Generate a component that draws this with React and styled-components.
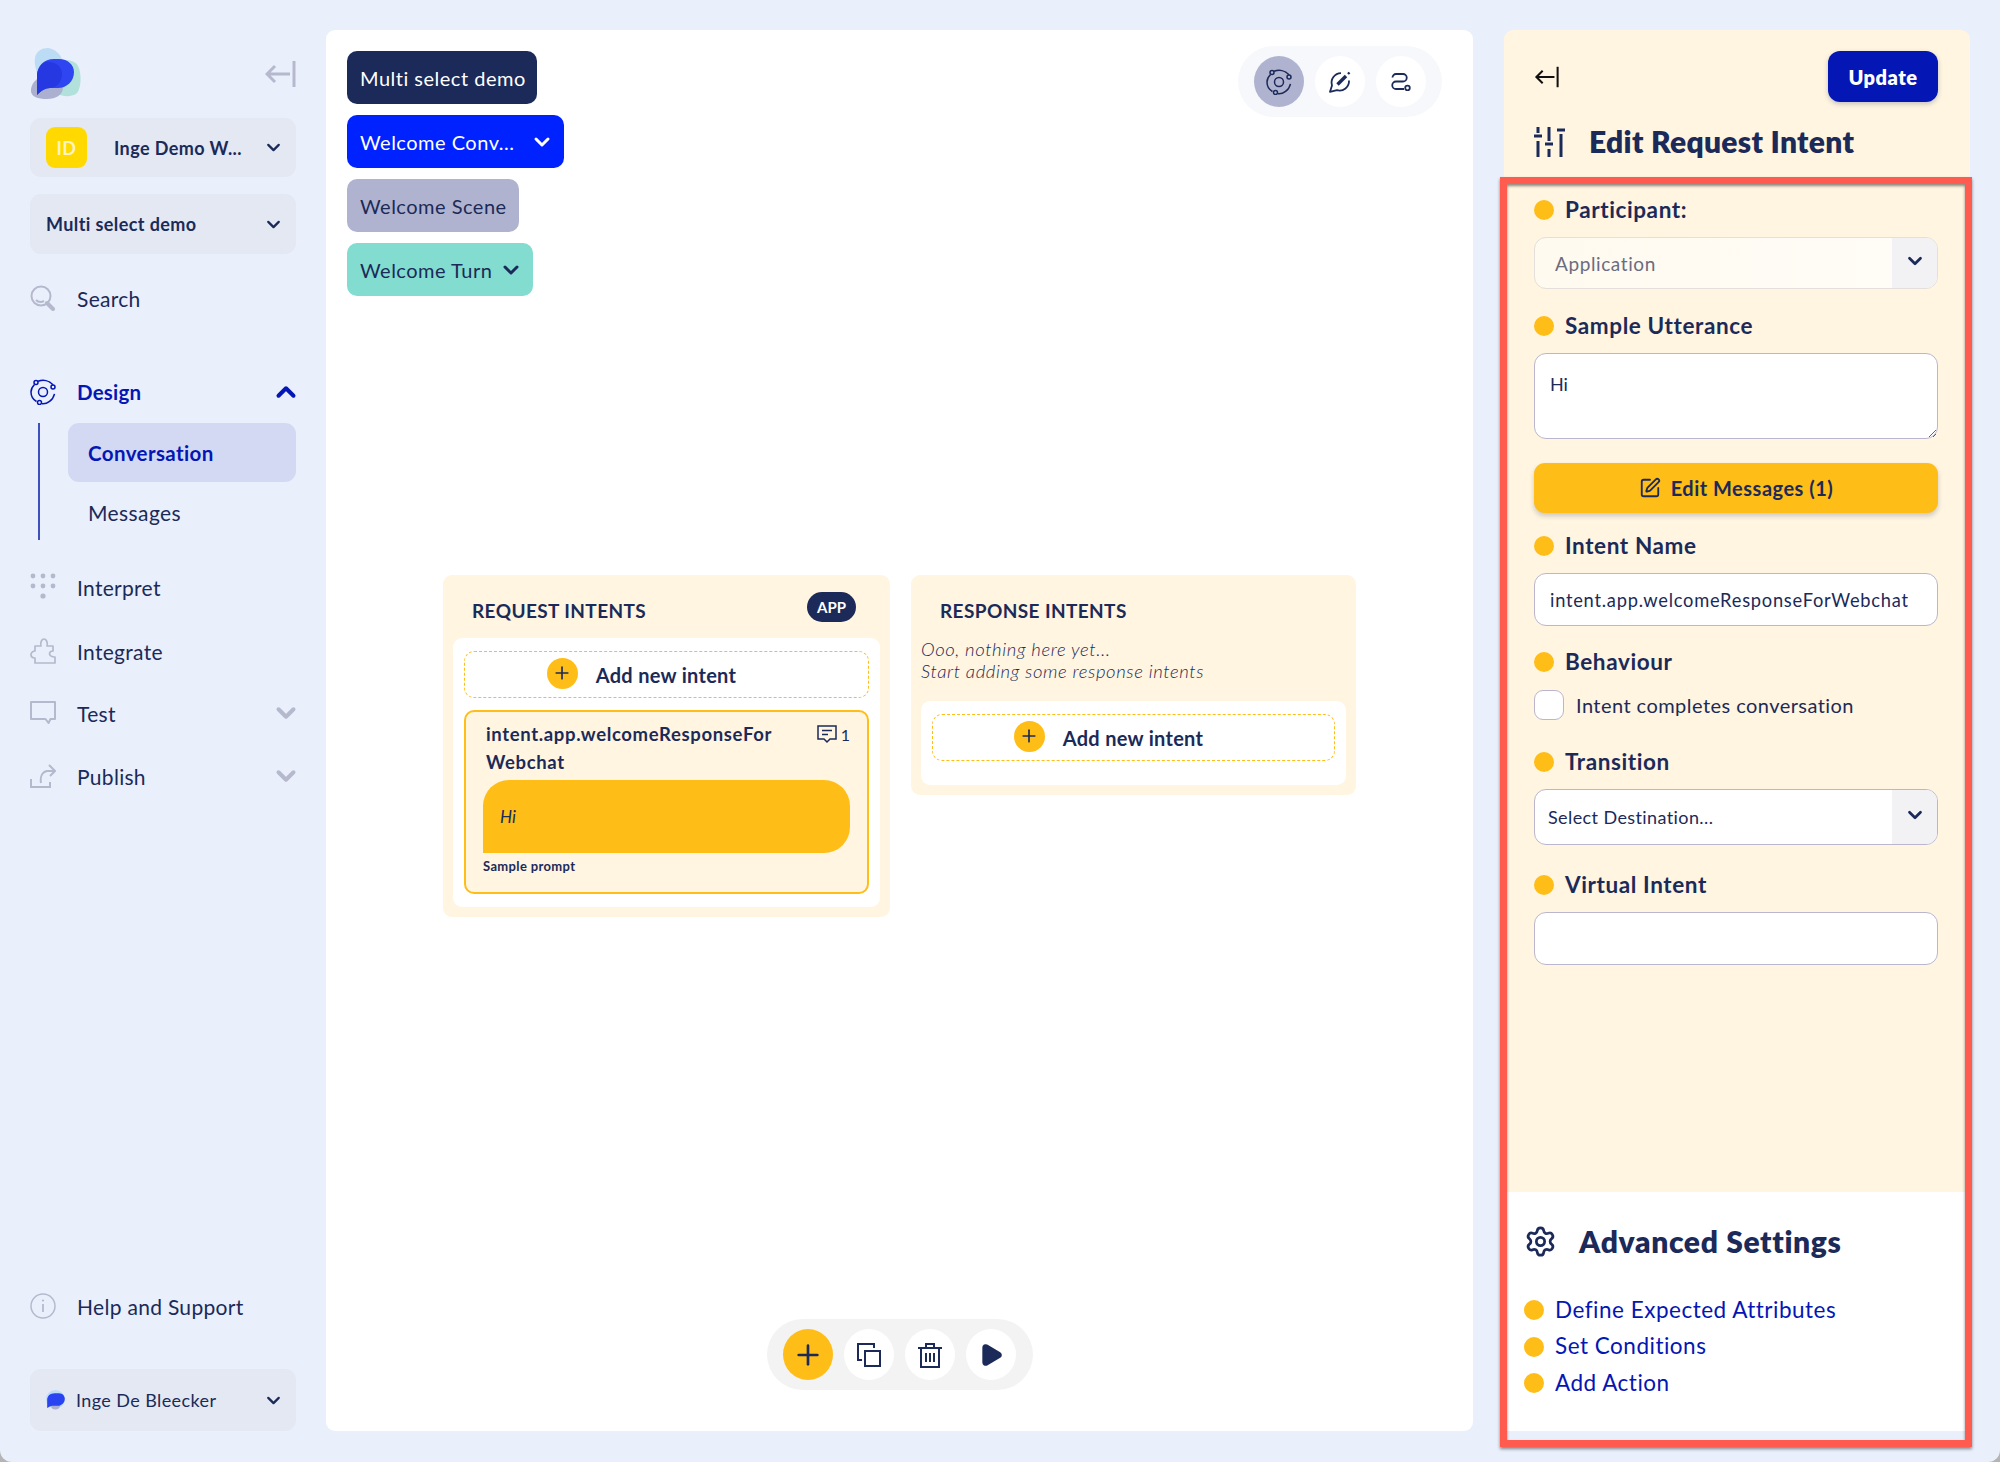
import React from "react";
import styled, { createGlobalStyle } from "styled-components";
import { ChevronDown, ChevronUp, Plus, Settings, SquarePen, Play } from "lucide-react";

const NAVY = "#1b2a58";
const BLUE = "#0416b4";
const YELLOW = "#ffbd17";
const CREAM = "#fff5e0";
const GREY = "#b6b9cd";
const FONT = `Lato, "Noto Sans", sans-serif`;

const Global = createGlobalStyle`
  html, body { margin: 0; padding: 0; background: #b4b4b4; }
  * { box-sizing: border-box; }
  body { font-family: ${FONT}; color: ${NAVY}; }
`;

const Page = styled.div`
  width: 2000px;
  height: 1462px;
  padding: 30px 30px 31px 30px;
  background: #e9effb;
  border-radius: 0 0 12px 12px;
  display: grid;
  grid-template-columns: 266px 1147px 467px;
  column-gap: 30px;
  overflow: hidden;
  & > :last-child { margin-left: 1px; }
`;

/* Sidebar */
const Sidebar = styled.aside`
  display: flex;
  flex-direction: column;
  min-height: 0;
`;
const LogoRow = styled.div`
  margin-top: 18px;
  height: 51px;
  display: flex;
  align-items: center;
  justify-content: space-between;
`;
const SideBox = styled.div`
  margin-top: ${(p) => p.$mt || 0}px;
  height: ${(p) => p.$h}px;
  border-radius: 11px;
  background: #e3e8f3;
  display: flex;
  align-items: center;
  padding: 0 12px 0 16px;
  font-size: ${(p) => p.$size || 18}px;
  font-weight: ${(p) => p.$weight || 700};
  letter-spacing: ${(p) => p.$ls || 0.4}px;
`;
const Badge = styled.span`
  width: 41px;
  height: 41px;
  border-radius: 9px;
  background: #ffd900;
  color: #fff3c0;
  font-size: 18px;
  font-weight: 700;
  display: flex;
  align-items: center;
  justify-content: center;
  margin-right: 27px;
`;
const Grow = styled.span`
  flex: 1;
  white-space: nowrap;
`;
const NavRow = styled.div`
  margin-top: ${(p) => p.$mt || 0}px;
  height: 40px;
  display: flex;
  align-items: center;
  gap: 21px;
  font-size: ${(p) => (p.$active ? 20.5 : 21)}px;
  letter-spacing: ${(p) => (p.$active ? 0.2 : 0.3)}px;
  font-weight: ${(p) => (p.$active ? 700 : 400)};
  color: ${(p) => (p.$active ? BLUE : NAVY)};
  & > svg:first-child { flex: none; }
`;
const SubList = styled.div`
  margin-top: 11px;
  margin-left: 8px;
  height: 117px;
  border-left: 2px solid #3f4fbc;
  padding-left: 28px;
`;
const SubItem = styled.div`
  height: ${(p) => (p.$active ? 59 : 56)}px;
  margin-bottom: 2px;
  padding-left: 20px;
  display: flex;
  align-items: center;
  border-radius: 11px;
  font-size: ${(p) => (p.$active ? 20.5 : 21)}px;
  letter-spacing: 0.4px;
  background: ${(p) => (p.$active ? "#d3d9f2" : "transparent")};
  color: ${(p) => (p.$active ? BLUE : NAVY)};
  font-weight: ${(p) => (p.$active ? 700 : 400)};
`;
const Spacer = styled.div`
  flex: 1;
`;

/* Canvas */
const Canvas = styled.main`
  position: relative;
  background: #fff;
  border-radius: 9px;
  padding: 21px;
`;
const Crumbs = styled.div`
  display: flex;
  flex-direction: column;
  align-items: flex-start;
  gap: 11px;
`;
const Crumb = styled.div`
  height: 53px;
  width: ${(p) => p.$w}px;
  border-radius: 10px;
  padding: 0 10px 0 13px;
  display: flex;
  align-items: center;
  justify-content: space-between;
  white-space: nowrap;
  font-size: 20px;
  letter-spacing: 0.5px;
  background: ${(p) => p.$bg};
  color: ${(p) => p.$fg};
`;
const ToolPill = styled.div`
  position: absolute;
  display: flex;
  gap: 11px;
  border-radius: 40px;
  background: ${(p) => p.$bg};
  padding: 10px 16px 10px 16px;
  ${(p) => p.$pos}
`;
const ToolBtn = styled.div`
  width: 50px;
  height: 51px;
  border-radius: 50%;
  background: ${(p) => p.$bg || "#fff"};
  display: flex;
  align-items: center;
  justify-content: center;
  color: ${NAVY};
`;
const Nodes = styled.div`
  position: absolute;
  left: 117px;
  top: 545px;
  display: flex;
  align-items: flex-start;
  gap: 21px;
`;
const Column = styled.section`
  width: ${(p) => p.$w}px;
  background: ${CREAM};
  border-radius: 9px;
  padding: 0 10px 10px 10px;
`;
const ColHead = styled.div`
  height: 63px;
  padding: 17px 24px 0 19px;
  display: flex;
  justify-content: space-between;
`;
const ColTitle = styled.h3`
  margin: 3px 0 0;
  font-size: 19px;
  line-height: 32px;
  font-weight: 700;
  letter-spacing: 0.4px;
`;
const AppPill = styled.span`
  width: 49px;
  height: 30px;
  border-radius: 15px;
  background: ${NAVY};
  color: #fff;
  font-size: 15px;
  font-weight: 700;
  display: flex;
  align-items: center;
  justify-content: center;
`;
const Empty = styled.p`
  margin: 0 0 19px 0;
  font-size: 18.5px;
  line-height: 22px;
  font-style: italic;
  font-weight: 300;
  letter-spacing: 0.6px;
`;
const White = styled.div`
  background: #fff;
  border-radius: 9px;
  padding: 13px 11px ${(p) => p.$pb || 13}px;
  display: flex;
  flex-direction: column;
  gap: 12px;
`;
const AddNew = styled.div`
  height: 47px;
  padding-right: 50px;
  border: 1.5px dashed ${YELLOW};
  border-radius: 10px;
  display: flex;
  align-items: center;
  justify-content: center;
  gap: 18px;
  font-size: 20px;
  font-weight: 700;
  letter-spacing: 0.3px;
`;
const RoundPlus = styled.span`
  width: 31px;
  height: 31px;
  border-radius: 50%;
  background: ${YELLOW};
  display: flex;
  align-items: center;
  justify-content: center;
  margin-top: -3px;
`;
const IntentCard = styled.div`
  height: 184px;
  border: 2.5px solid ${YELLOW};
  border-radius: 10px;
  background: ${CREAM};
  padding: 8px 17px 0 17px;
`;
const IntentHead = styled.div`
  display: flex;
  justify-content: space-between;
  padding-left: 3px;
`;
const IntentName = styled.div`
  font-size: 18.5px;
  line-height: 28px;
  font-weight: 700;
  letter-spacing: 0.65px;
`;
const Count = styled.div`
  display: flex;
  align-items: center;
  gap: 4px;
  height: 28px;
  font-size: 16px;
`;
const Bubble = styled.div`
  margin-top: 4px;
  height: 73px;
  background: ${YELLOW};
  border-radius: 26px 26px 26px 0;
  padding-left: 17px;
  display: flex;
  align-items: center;
  font-style: italic;
  font-size: 17px;
`;
const Caption = styled.div`
  margin-top: 5px;
  font-size: 13px;
  line-height: 16px;
  font-weight: 700;
  letter-spacing: 0.35px;
`;

/* Right panel */
const Panel = styled.aside`
  position: relative;
  display: flex;
  flex-direction: column;
  border-radius: 9px;
  background: ${CREAM};
`;
const PanelHead = styled.header`
  height: 166px;
  padding: 21px 32px 0 30px;
`;
const HeadTop = styled.div`
  display: flex;
  align-items: center;
  justify-content: space-between;
`;
const UpdateBtn = styled.button`
  width: 110px;
  height: 51px;
  border: 0;
  border-radius: 12px;
  background: ${BLUE};
  color: #fff;
  font-family: ${FONT};
  font-size: 20px;
  font-weight: 800;
  letter-spacing: 0.5px;
  box-shadow: 0 2px 5px rgba(27, 42, 88, 0.25);
`;
const PanelTitle = styled.h2`
  margin: 20px 0 0;
  display: flex;
  align-items: center;
  gap: ${(p) => p.$gap || 24}px;
  font-size: 30px;
  line-height: 38px;
  font-weight: 800;
  letter-spacing: ${(p) => p.$ls}px;
`;
const PanelBody = styled.div`
  flex: 1;
  padding: 0 32px 0 30px;
`;
const Field = styled.div`
  margin-top: ${(p) => p.$mt || 0}px;
  display: flex;
  flex-direction: column;
  gap: 13px;
`;
const Label = styled.label`
  height: 28px;
  display: flex;
  align-items: center;
  gap: 10px;
  font-size: 22.5px;
  font-weight: 700;
  letter-spacing: 0.6px;
`;
const LiftedText = styled.span`
  margin-bottom: 2px;
`;
const Dot = styled.span`
  flex: none;
  width: 20px;
  height: 20px;
  border-radius: 50%;
  background: ${YELLOW};
  margin-right: 1px;
`;
const SelectBox = styled.div`
  height: ${(p) => p.$h}px;
  border: 1.5px solid ${(p) => (p.$disabled ? "#e2dfdc" : "#b9b6ce")};
  border-radius: 12px;
  background: ${(p) => (p.$disabled ? "linear-gradient(90deg,#fffaef,#fffdf8)" : "#fff")};
  display: flex;
  overflow: hidden;
  font-size: ${(p) => (p.$disabled ? 19 : 18)}px;
  letter-spacing: ${(p) => (p.$disabled ? 0.6 : 0.4)}px;
  color: ${(p) => (p.$disabled ? "#6a6c80" : NAVY)};
`;
const SelectValue = styled.div`
  flex: 1;
  display: flex;
  align-items: center;
  padding-left: ${(p) => p.$pl}px;
`;
const SelectArrow = styled.div`
  width: 45px;
  background: #f2f2f4;
  color: ${NAVY};
  display: flex;
  align-items: center;
  justify-content: center;
  padding-bottom: 4px;
`;
const TextArea = styled.textarea`
  display: block;
  width: 100%;
  height: 86px;
  border: 1.5px solid #b9b6ce;
  border-radius: 12px;
  background: #fff;
  padding: 19px 15px;
  font-family: ${FONT};
  font-size: 18px;
  color: ${NAVY};
  outline: none;
`;
const TextInput = styled.input`
  display: block;
  width: 100%;
  height: 53px;
  border: 1.5px solid #b9b6ce;
  border-radius: 12px;
  background: #fff;
  padding: 0 15px;
  font-family: ${FONT};
  font-size: 18.3px;
  letter-spacing: 0.75px;
  color: ${NAVY};
  outline: none;
`;
const EditBtn = styled.button`
  margin-top: 24px;
  width: 100%;
  height: 50px;
  border: 0;
  border-radius: 11px;
  background: ${YELLOW};
  color: ${NAVY};
  font-family: ${FONT};
  font-size: 20px;
  font-weight: 700;
  letter-spacing: 0.5px;
  display: flex;
  align-items: center;
  justify-content: center;
  gap: 10px;
  box-shadow: 0 3px 5px rgba(27, 42, 88, 0.22);
`;
const CheckRow = styled.div`
  display: flex;
  align-items: center;
  gap: 12px;
  font-size: 20px;
  letter-spacing: 0.45px;
  margin-top: 1px;
`;
const Check = styled.span`
  width: 30px;
  height: 30px;
  border: 1.5px solid #b9b6ce;
  border-radius: 9px;
  background: #fff;
`;
const Advanced = styled.section`
  height: 239px;
  background: #fff;
  padding: 30px 20px 0 20px;
`;
const LinkList = styled.div`
  margin-top: 36px;
  display: flex;
  flex-direction: column;
  gap: 8.5px;
`;
const LinkRow = styled.a`
  height: 28px;
  display: flex;
  align-items: center;
  gap: 10px;
  font-size: 22.5px;
  letter-spacing: 0.5px;
  color: ${BLUE};
`;
const Annotation = styled.div`
  position: absolute;
  left: -4px;
  right: -2px;
  top: 147px;
  bottom: -16px;
  border: 7px solid #ff5b4f;
  box-shadow: 0 2px 3px rgba(0, 0, 0, 0.45), inset 0 2px 3px rgba(0, 0, 0, 0.45);
  pointer-events: none;
`;

/* Drawings */
const Logo = ({ s = 51 }) => (
  <svg width={s} height={s} viewBox="0 0 51 51">
    <path d="M5 10C6 3 12 0 18 0c7 1 13 6 15 14l-4 16H9C6 22 4 16 5 10Z" fill="#bcdcf5" />
    <path d="M24 14c8-3 20-3 24 4 4 8 3 22-1 27-4 4-14 4-19 1Z" fill="#b2e0db" />
    <path d="M1 41c1-7 8-14 17-14s15 6 15 12c0 8-7 12-16 12C8 51 0 49 1 41Z" fill="#acb0d0" />
    <path d="M7 47V28C7 18 14 11 24 11h5c9 0 15 6 15 13 0 10-8 16-16 16h-8C15 40 11 43 7 47Z" fill="#2f45f2" />
    <path d="M7 47V28c0-6 3-11 8-14 8-1 17 3 17 12 0 7-4 13-12 14-5 0-9 3-13 7Z" fill="#2638e2" />
  </svg>
);
const Collapse = ({ color = GREY, w = 31, h = 28, sw = 3 }) => (
  <svg width={w} height={h} viewBox="0 0 31 28" fill="none" stroke={color} strokeWidth={sw}>
    <path d="M2 14h23M10 6l-8 8 8 8" />
    <path d="M29 1v26" />
  </svg>
);
const Orbit = ({ s = 26, color = BLUE }) => (
  <svg width={s} height={s} viewBox="0 0 26 26" fill="none" stroke={color} strokeWidth="1.5">
    <circle cx="13" cy="13" r="4.5" />
    <path d="M4.500 5.500C2 8 1 10.500 1 13c0 4 2 7.500 5.500 9.500M12 24.800c5 .6 11-3.500 12.500-10M8 2.300c5-2 11-1 15 3.500" />
    <circle cx="6" cy="3.500" r="2" />
    <circle cx="23" cy="8" r="2" />
    <circle cx="9.500" cy="23.500" r="2" />
  </svg>
);
const SearchIcon = () => (
  <svg width="26" height="26" viewBox="0 0 26 26" fill="none" stroke={GREY} strokeWidth="2">
    <circle cx="11" cy="11" r="9.500" />
    <path d="M6 15c2 2 5 2.500 8 1" />
    <path d="M17 18l6 6" strokeWidth="4" strokeLinecap="round" />
  </svg>
);
const DotsIcon = () => (
  <svg width="26" height="28" viewBox="0 0 26 28" fill={GREY}>
    {[3, 13, 23].map((x) => <circle key={x} cx={x} cy="3" r="2.400" />)}
    {[3, 13, 23].map((x) => <circle key={x} cx={x} cy="13" r="2.400" />)}
    <circle cx="13" cy="23" r="2.600" />
  </svg>
);
const PuzzleIcon = () => (
  <svg width="26" height="26" viewBox="0 0 26 26" fill="none" stroke={GREY} strokeWidth="1.700" strokeLinejoin="round">
    <path d="M5 25v-5c-3 0-4-2-4-3.500S3 13 5 13V8h6c-1-4 1-7 3-7s4 3 3 7h6v5c-3 0-3.500 2-3.500 3s1.500 3 5.500 3v6Z" />
  </svg>
);
const ChatIcon = () => (
  <svg width="26" height="24" viewBox="0 0 26 24" fill="none" stroke={GREY} strokeWidth="2">
    <path d="M1 1h24v17h-4.500l-2 4-3-4H1Z" strokeLinejoin="round" />
  </svg>
);
const ShareIcon = () => (
  <svg width="26" height="26" viewBox="0 0 26 26" fill="none" stroke={GREY} strokeWidth="2">
    <path d="M1 16v8h19v-5" />
    <path d="M11 20c-1-6 1-11 6-12h7M19 2l6 6-5 5" />
  </svg>
);
const InfoIcon = () => (
  <svg width="26" height="26" viewBox="0 0 26 26" fill="none" stroke={GREY} strokeWidth="1.500">
    <circle cx="13" cy="13" r="12" />
    <path d="M13 11v8" strokeWidth="1.800" />
    <circle cx="13" cy="7.500" r="1.100" fill={GREY} stroke="none" />
  </svg>
);
const MiniLogo = () => (
  <svg width="20" height="20" viewBox="0 0 51 51" style={{ marginRight: 10 }}>
    <circle cx="24" cy="24" r="24" fill="#bcdcf5" />
    <circle cx="24" cy="38" r="12" fill="#acb0d0" />
    <path d="M3 46V25C3 15 11 8 22 8h11c10 0 15 8 15 14 0 10-8 18-18 18H16C12 40 8 43 3 46Z" fill="#2a43f0" />
  </svg>
);
const ChatEdit = () => (
  <svg width="24" height="24" viewBox="0 0 24 24" fill="none" stroke={NAVY} strokeWidth="1.800" strokeLinejoin="round">
    <path d="M13 3.200A9.500 9.500 0 0 0 4 15.500L2 21.800l7-1.600A9.500 9.500 0 0 0 21 10.500" />
    <path d="M9.500 14.500 18 6" strokeWidth="3.400" />
    <path d="M20 4l1.500-1.500" strokeWidth="2.400" />
  </svg>
);
const RouteIcon = () => (
  <svg width="20" height="18" viewBox="0 0 20 18" fill="none" stroke={NAVY} strokeWidth="1.800">
    <path d="M1.500 4.500A3.500 3.500 0 0 1 5 1h7a3.700 3.700 0 0 1 0 7.500H5A3.700 3.700 0 0 0 5 16h8" />
    <circle cx="16.500" cy="15" r="2.300" />
  </svg>
);
const CopyIcon = () => (
  <svg width="24" height="24" viewBox="0 0 24 24" fill="none" stroke={NAVY} strokeWidth="2">
    <path d="M5 17H1V1h16v4" />
    <rect x="8" y="8" width="15" height="15" />
  </svg>
);
const TrashIcon = () => (
  <svg width="24" height="26" viewBox="0 0 24 26" fill="none" stroke={NAVY} strokeWidth="2">
    <path d="M0 6h24M8 6V2h8v4M3 6v19h18V6M8 11v9M12 11v9M16 11v9" />
  </svg>
);
const SmallComment = () => (
  <svg width="20" height="20" viewBox="0 0 20 20" fill="none" stroke={NAVY} strokeWidth="1.500">
    <path d="M1 2h18v13h-6l-3 3-3-3H1ZM5 6.500h10M5 10.500h6" />
  </svg>
);
const SlidersIcon = () => (
  <svg width="31" height="31" viewBox="0 0 31 31" fill="none" stroke={NAVY} strokeWidth="3">
    <path d="M4 1v6M4 15v16M15 1v14M15 23v8M27 8v23" />
    <path d="M0 10h8M11 18h8M23 4h8" />
  </svg>
);

const Add = () => (
  <AddNew>
    <RoundPlus><Plus size={20} color={NAVY} strokeWidth={2} /></RoundPlus>
    Add new intent
  </AddNew>
);
const LabelDot = ({ children }) => (
  <Label><Dot /><LiftedText>{children}</LiftedText></Label>
);
const LinkDot = ({ children }) => (
  <LinkRow><Dot /><LiftedText>{children}</LiftedText></LinkRow>
);

export default function App() {
  return (
    <Page>
      <Global />
      <Sidebar>
        <LogoRow>
          <Logo />
          <Collapse />
        </LogoRow>
        <SideBox $mt={19} $h={59}>
          <Badge>ID</Badge>
          <Grow>Inge Demo W...</Grow>
          <ChevronDown size={21} strokeWidth={2.6} />
        </SideBox>
        <SideBox $mt={17} $h={60}>
          <Grow>Multi select demo</Grow>
          <ChevronDown size={21} strokeWidth={2.6} />
        </SideBox>
        <NavRow $mt={24}><SearchIcon />Search</NavRow>
        <NavRow $mt={54} $active>
          <Orbit />
          <Grow>Design</Grow>
          <ChevronUp size={30} strokeWidth={3.2} style={{ marginRight: -5 }} />
        </NavRow>
        <SubList>
          <SubItem $active>Conversation</SubItem>
          <SubItem>Messages</SubItem>
        </SubList>
        <NavRow $mt={27}><DotsIcon />Interpret</NavRow>
        <NavRow $mt={24}><PuzzleIcon />Integrate</NavRow>
        <NavRow $mt={22}>
          <ChatIcon />
          <Grow>Test</Grow>
          <ChevronDown size={30} strokeWidth={3.2} color={GREY} style={{ marginRight: -5 }} />
        </NavRow>
        <NavRow $mt={23}>
          <ShareIcon />
          <Grow>Publish</Grow>
          <ChevronDown size={30} strokeWidth={3.2} color={GREY} style={{ marginRight: -5 }} />
        </NavRow>
        <Spacer />
        <NavRow><InfoIcon />Help and Support</NavRow>
        <SideBox $mt={43} $h={62} $size={18} $weight={400} $ls={0.4}>
          <MiniLogo />
          <Grow>Inge De Bleecker</Grow>
          <ChevronDown size={21} strokeWidth={2.6} />
        </SideBox>
      </Sidebar>

      <Canvas>
        <Crumbs>
          <Crumb $w={190} $bg={NAVY} $fg="#fff">Multi select demo</Crumb>
          <Crumb $w={217} $bg="#0022ff" $fg="#fff">
            Welcome Conv...
            <ChevronDown size={24} strokeWidth={3} />
          </Crumb>
          <Crumb $w={172} $bg="#b0b3cf" $fg={NAVY}>Welcome Scene</Crumb>
          <Crumb $w={186} $bg="#82dccf" $fg={NAVY}>
            Welcome Turn
            <ChevronDown size={24} strokeWidth={3} />
          </Crumb>
        </Crumbs>

        <ToolPill $bg="#f7f8fb" $pos="top: 16px; left: 912px;">
          <ToolBtn $bg="#b0b3cf"><Orbit color={NAVY} /></ToolBtn>
          <ToolBtn><ChatEdit /></ToolBtn>
          <ToolBtn><RouteIcon /></ToolBtn>
        </ToolPill>

        <Nodes>
          <Column $w={447}>
            <ColHead>
              <ColTitle>REQUEST INTENTS</ColTitle>
              <AppPill>APP</AppPill>
            </ColHead>
            <White>
              <Add />
              <IntentCard>
                <IntentHead>
                  <IntentName>intent.app.welcomeResponseFor<br />Webchat</IntentName>
                  <Count><SmallComment />1</Count>
                </IntentHead>
                <Bubble>Hi</Bubble>
                <Caption>Sample prompt</Caption>
              </IntentCard>
            </White>
          </Column>
          <Column $w={445}>
            <ColHead>
              <ColTitle>RESPONSE INTENTS</ColTitle>
            </ColHead>
            <Empty>Ooo, nothing here yet...<br />Start adding some response intents</Empty>
            <White $pb={24}>
              <Add />
            </White>
          </Column>
        </Nodes>

        <ToolPill $bg="#f3f3f3" $pos="bottom: 41px; left: 441px; padding-right: 17px;">
          <ToolBtn $bg={YELLOW}><Plus size={32} strokeWidth={2} color={NAVY} /></ToolBtn>
          <ToolBtn><CopyIcon /></ToolBtn>
          <ToolBtn><TrashIcon /></ToolBtn>
          <ToolBtn><Play size={26} fill={NAVY} color={NAVY} strokeWidth={2} /></ToolBtn>
        </ToolPill>
      </Canvas>

      <Panel>
        <PanelHead>
          <HeadTop>
            <Collapse color="#111" w={26} h={22} sw={2.6} />
            <UpdateBtn>Update</UpdateBtn>
          </HeadTop>
          <PanelTitle $ls={0.3}><SlidersIcon />Edit Request Intent</PanelTitle>
        </PanelHead>
        <PanelBody>
          <Field>
            <LabelDot>Participant:</LabelDot>
            <SelectBox $h={52} $disabled>
              <SelectValue $pl={20}>Application</SelectValue>
              <SelectArrow><ChevronDown size={22} strokeWidth={3} /></SelectArrow>
            </SelectBox>
          </Field>
          <Field $mt={23}>
            <LabelDot>Sample Utterance</LabelDot>
            <TextArea readOnly defaultValue="Hi" />
          </Field>
          <EditBtn><SquarePen size={22} strokeWidth={2} />Edit Messages (1)</EditBtn>
          <Field $mt={19}>
            <LabelDot>Intent Name</LabelDot>
            <TextInput readOnly value="intent.app.welcomeResponseForWebchat" />
          </Field>
          <Field $mt={22}>
            <LabelDot>Behaviour</LabelDot>
            <CheckRow><Check />Intent completes conversation</CheckRow>
          </Field>
          <Field $mt={28}>
            <LabelDot>Transition</LabelDot>
            <SelectBox $h={56}>
              <SelectValue $pl={13}>Select Destination...</SelectValue>
              <SelectArrow><ChevronDown size={22} strokeWidth={3} /></SelectArrow>
            </SelectBox>
          </Field>
          <Field $mt={26}>
            <LabelDot>Virtual Intent</LabelDot>
            <TextInput readOnly value="" />
          </Field>
        </PanelBody>
        <Advanced>
          <PanelTitle $gap={22} $ls={0.65} style={{ margin: 0 }}>
            <Settings size={33} strokeWidth={2} />
            Advanced Settings
          </PanelTitle>
          <LinkList>
            <LinkDot>Define Expected Attributes</LinkDot>
            <LinkDot>Set Conditions</LinkDot>
            <LinkDot>Add Action</LinkDot>
          </LinkList>
        </Advanced>
        <Annotation />
      </Panel>
    </Page>
  );
}
